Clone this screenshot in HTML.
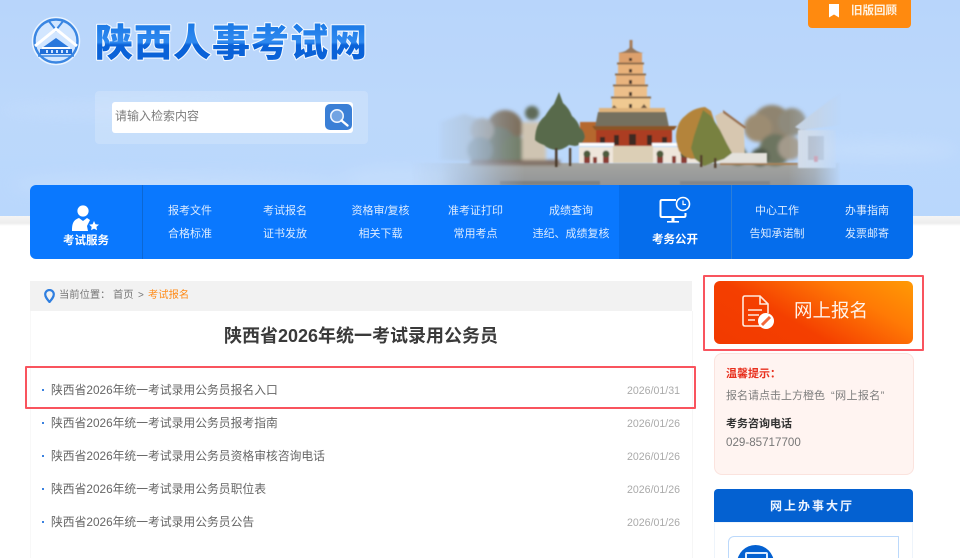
<!DOCTYPE html>
<html lang="zh-CN">
<head>
<meta charset="utf-8">
<title>陕西人事考试网</title>
<style>
html,body{margin:0;padding:0;background:#fff;width:960px;height:558px;overflow:hidden;}
#w{width:960px;height:558px;overflow:hidden;position:relative;font-family:"Liberation Sans","Noto Sans CJK SC",sans-serif;color:#666;filter:blur(.3px);}
.a{position:absolute;white-space:nowrap;line-height:1;}
.c{transform:translateX(-50%);}
.n{font-size:11px;color:#dcebff;}
.li{font-size:11.8px;color:#666;left:51px;}
.d{font-size:10.6px;color:#aaa;left:627px;}
.dot{position:absolute;left:42px;width:2px;height:2px;background:#3b82e0;}
</style>
</head>
<body>
<div id="w">
<div class="a" style="left:0;top:0;width:960px;height:216px;background:linear-gradient(180deg,#b8d5fb 0%,#bcd8fb 50%,#b9d7fc 100%);"></div>

<svg class="a" style="left:0;top:0" width="960" height="216" viewBox="0 0 960 216">
 <defs>
  <filter id="b1" x="-5%" y="-5%" width="110%" height="110%"><feGaussianBlur stdDeviation="0.8"/></filter>
  <filter id="b3" x="-5%" y="-5%" width="110%" height="110%"><feGaussianBlur stdDeviation="1.8"/></filter>
  <filter id="b2"><feGaussianBlur stdDeviation="8"/></filter>
  <linearGradient id="fade" x1="410" x2="850" y1="0" y2="0" gradientUnits="userSpaceOnUse">
   <stop offset="0" stop-color="#000"/><stop offset="0.07" stop-color="#1a1a1a"/><stop offset="0.14" stop-color="#666"/><stop offset="0.21" stop-color="#ccc"/><stop offset="0.26" stop-color="#fff"/>
   <stop offset="0.86" stop-color="#fff"/><stop offset="0.92" stop-color="#aaa"/><stop offset="0.98" stop-color="#000"/>
  </linearGradient>
  <mask id="m" maskUnits="userSpaceOnUse" x="410" y="0" width="440" height="216"><rect x="410" y="0" width="440" height="216" fill="url(#fade)"/></mask>
  <linearGradient id="lg" x1="0" x2="0" y1="0" y2="1"><stop offset="0" stop-color="#0f6fe0"/><stop offset="0.55" stop-color="#2f8af0"/><stop offset="0.6" stop-color="#0a62d8"/><stop offset="1" stop-color="#0a62d8"/></linearGradient>
  <linearGradient id="gr" x1="0" x2="0" y1="0" y2="1"><stop offset="0" stop-color="#a5a5a0"/><stop offset="1" stop-color="#8f9296"/></linearGradient>
 </defs>
 <g filter="url(#b2)" fill="#cfe3fd" opacity=".45">
  <ellipse cx="120" cy="110" rx="120" ry="6"/><ellipse cx="180" cy="185" rx="170" ry="12"/>
  <ellipse cx="880" cy="150" rx="80" ry="10"/><ellipse cx="400" cy="180" rx="60" ry="14"/>
 </g>
 <g mask="url(#m)">
  <g filter="url(#b1)">
   <rect x="410" y="163" width="430" height="24" fill="url(#gr)"/>
   <rect x="500" y="181" width="100" height="4" fill="#7f8182"/><rect x="680" y="181" width="90" height="4" fill="#84868a"/>
  </g>
  <g filter="url(#b3)">
   <path d="M440 160V122l24-8 18 6v42z" fill="#a6b1ba"/>
   <circle cx="505" cy="128" r="18" fill="#7a6b55"/><circle cx="498" cy="145" r="18" fill="#6f7666"/><circle cx="515" cy="150" r="14" fill="#707a63"/>
   <circle cx="482" cy="130" r="12" fill="#9b958b"/><circle cx="480" cy="150" r="13" fill="#7d8683"/>
   <rect x="522" y="122" width="24" height="42" fill="#cfc4b2"/>
   <circle cx="532" cy="113" r="7" fill="#5e6a58"/>
   <rect x="470" y="160" width="90" height="5" fill="#7a6658"/>
   <circle cx="772" cy="125" r="20" fill="#8f8470"/><circle cx="792" cy="122" r="14" fill="#8e8a7c"/><circle cx="758" cy="128" r="14" fill="#9c8c72"/>
   <circle cx="775" cy="150" r="16" fill="#6d7560"/><circle cx="790" cy="148" r="12" fill="#a39a8b"/>
   <circle cx="760" cy="157" r="9" fill="#50594a"/><circle cx="738" cy="156" r="9" fill="#545e47"/>
  </g>
  <g filter="url(#b1)">
   <path d="M722 112l22 16 1 35h-18l-6-22-6-25z" fill="#d7c7b0"/>
   <path d="M723 110l23 17-1 2-22-16z" fill="#9a6f4d"/>
   <rect x="712" y="153" width="55" height="10" fill="#e4e2dc"/>
   <rect x="580" y="122" width="16" height="24" fill="#b5682f"/>
   <path d="M535 140q0-16 10-24 5-8 9-12l5-12 4 11q6 5 9 13 6 5 8 12 4 2 5 9-2 8-10 9l-6-1q-6 5-13 5-8-1-12-5-6-2-9-5z" fill="#586a4c"/>
   <path d="M555 148h2.500v19H555z" fill="#4b3a2c"/>
   <path d="M569 148h2.200v18h-2.200z" fill="#4b3a2c"/>
   <rect x="629.500" y="40" width="3" height="9" fill="#a97e58"/>
   <path d="M618 53q9-1 13-7 4 6 13 7z" fill="#96775b"/>
   <rect x="619" y="53" width="23" height="10" fill="#dda06c"/><rect x="617" y="62.500" width="27" height="2" fill="#8a6a4c"/>
   <rect x="618" y="64.500" width="25" height="10" fill="#e9b27a"/><rect x="615" y="73.500" width="31" height="2" fill="#8a6a4c"/>
   <rect x="616" y="75.500" width="29" height="10" fill="#e9b47e"/><rect x="613" y="84.500" width="35" height="2" fill="#8a6a4c"/>
   <rect x="614" y="86.500" width="33" height="11" fill="#edbf8a"/><rect x="611" y="96.500" width="40" height="2.200" fill="#8a6a4c"/>
   <rect x="612" y="98.500" width="38" height="11" fill="#f0c991"/>
   <g fill="#3f3229"><rect x="629" y="58" width="3" height="3"/><rect x="629" y="69" width="3" height="3.500"/><rect x="629" y="80" width="3" height="4"/><rect x="629" y="92" width="3" height="4"/><rect x="629" y="104" width="3" height="4"/></g>
   <path d="M611 109l3-4 4 4zM640 109l4-5 4 5z" fill="#6d5640"/>
   <rect x="599" y="108" width="66" height="4" fill="#dfb47d"/>
   <path d="M598 112h68l3 15h-74z" fill="#75705f"/>
   <path d="M592 126h85l-3 4h-79z" fill="#8b5526"/>
   <rect x="596" y="130" width="76" height="16" fill="#ac3d22"/>
   <g fill="#3d2a22"><rect x="614" y="135" width="5" height="10"/><rect x="629" y="134" width="7" height="11"/><rect x="647" y="135" width="5" height="10"/><rect x="600" y="137" width="5" height="8"/><rect x="662" y="137" width="5" height="8"/></g>
   <rect x="579" y="147" width="35" height="16" fill="#efe6db"/>
   <rect x="652" y="147" width="48" height="16" fill="#efe6db"/>
   <rect x="613" y="146" width="40" height="17" fill="#dccfb6"/>
   <rect x="579" y="143" width="35" height="3" fill="#fff"/><rect x="652" y="143" width="32" height="3" fill="#fff"/>
   <g fill="#8a3a30"><rect x="584" y="155" width="6" height="8"/><rect x="593" y="157" width="4" height="6"/><rect x="603" y="155" width="6" height="8"/><rect x="657" y="155" width="6" height="8"/><rect x="672" y="156" width="4" height="7"/><rect x="681" y="155" width="6" height="8"/></g>
   <g fill="#4d5a3a"><circle cx="587" cy="154" r="3.500"/><circle cx="606" cy="154" r="3.500"/><circle cx="660" cy="154" r="3.500"/><circle cx="684" cy="154" r="3.500"/></g>
   <path d="M676 136q1-14 9-20 8-8 20-9l6 4 4 12-6 18-8 18h-10q-8-2-12-8-3-8-3-15z" fill="#b4843a"/>
   <path d="M703 110l8 6 9 14 7 14 5 9-8 6-12 4-8 3-9-7-4-11 3-12 4-12z" fill="#78813f"/>
   <path d="M700 155h2.500v12H700zM714 158h2.500v10H714z" fill="#54402d"/>
   <rect x="720" y="163" width="90" height="2" fill="#a88158"/>
   <path d="M795 127l18-14 16-12 12-8v32l-40 5z" fill="#c7d2df"/>
   <rect x="798" y="130" width="38" height="38" fill="#d6dde6"/><rect x="808" y="136" width="16" height="24" fill="#b4b9c2"/>
   <rect x="814" y="156" width="4" height="6" fill="#d48a94"/>
  </g>
 </g>
 <g>
  <circle cx="56" cy="41" r="23.500" fill="#d2e6ff" stroke="#eaf4ff" stroke-width="1.500"/>
  <circle cx="56" cy="41" r="21.500" fill="none" stroke="#3a86e2" stroke-width="2.400"/>
  <path d="M48 20l8 10 8-10" fill="none" stroke="#3a86e2" stroke-width="2"/>
  <path d="M35 46l21-17 21 17" fill="none" stroke="#fff" stroke-width="3"/>
  <path d="M42 48l14-10 14 10z" fill="#2a78dc"/>
  <rect x="42" y="47" width="28" height="2" fill="#fff"/>
  <rect x="40" y="49" width="32" height="5" fill="#1f6dd6"/>
  <g fill="#cfe3ff"><rect x="46" y="50" width="2" height="3"/><rect x="51" y="50" width="2" height="3"/><rect x="56" y="50" width="2" height="3"/><rect x="61" y="50" width="2" height="3"/><rect x="66" y="50" width="2" height="3"/></g>
  <path d="M38 56h36" stroke="#3a86e2" stroke-width="1.500"/>
 </g>
 <text x="95" y="56" font-family="'Noto Sans CJK SC',sans-serif" font-weight="900" font-size="38" letter-spacing="1" fill="url(#lg)" stroke="#f2f8ff" stroke-width="2.200" paint-order="stroke" stroke-linejoin="round">陕西人事考试网</text>
</svg>

<div class="a" style="left:808px;top:-4px;width:103px;height:32px;background:#ff8a0f;border-radius:4px;"></div>
<svg class="a" style="left:828px;top:4px" width="12" height="14" viewBox="0 0 12 14"><path d="M1 0h10v13.500l-5-3-5 3z" fill="#fff"/></svg>
<div class="a" style="left:851px;top:6px;font-size:11.500px;font-weight:700;color:#fff2e2;">旧版回顾</div>

<div class="a" style="left:95px;top:91px;width:273px;height:53px;background:rgba(255,255,255,.18);border-radius:4px;"></div>
<div class="a" style="left:112px;top:102px;width:241px;height:31px;background:#fff;border-radius:3px;"></div>
<div class="a" style="left:115px;top:110px;font-size:12px;color:#7d7d7d;">请输入检索内容</div>
<div class="a" style="left:325px;top:104px;width:27px;height:26px;background:#3a7fd6;border-radius:5px;"></div>
<svg class="a" style="left:325px;top:104px" width="27" height="26" viewBox="0 0 27 26"><circle cx="12" cy="12" r="6.200" fill="#a9c9ef" fill-opacity=".5" stroke="#eef5ff" stroke-width="1.600"/><path d="M16.500 16.500l6 5" stroke="#fff" stroke-width="2.400" stroke-linecap="round"/></svg>

<div class="a" style="left:0;top:216px;width:960px;height:10px;background:linear-gradient(180deg,#f5f5f5,#ededed 70%,#fff);"></div>

<div class="a" style="left:30px;top:185px;width:883px;height:74px;background:#0a78fe;border-radius:6px;overflow:hidden;">
 <div class="a" style="left:112px;top:0;width:1px;height:74px;background:#0c67d3;"></div>
 <div class="a" style="left:589px;top:0;width:294px;height:74px;background:#056dec;"></div>
 <div class="a" style="left:701px;top:0;width:1px;height:74px;background:#2b7ed9;"></div>
</div>
<svg class="a" style="left:70px;top:203px" width="32" height="30" viewBox="0 0 32 30"><circle cx="13" cy="8" r="5.600" fill="#fff"/><path d="M2 28c0-7 1-11 7-13l4 3 4-3 3 2-3 6 1 5z" fill="#fff"/><path d="M20 20l1.500 3.200 3.500.4-2.600 2.300.7 3.400-3.100-1.700-3 1.700.7-3.400-2.600-2.300 3.500-.4z" transform="translate(4 -2)" fill="#fff"/></svg>
<div class="a c" style="left:86px;top:236px;font-size:11.500px;font-weight:700;color:#fff;">考试服务</div>

<div class="a c n" style="left:190px;top:206px;">报考文件</div><div class="a c n" style="left:190px;top:229px;">合格标准</div>
<div class="a c n" style="left:285px;top:206px;">考试报名</div><div class="a c n" style="left:285px;top:229px;">证书发放</div>
<div class="a c n" style="left:380.500px;top:206px;">资格审/复核</div><div class="a c n" style="left:380.500px;top:229px;">相关下载</div>
<div class="a c n" style="left:475.500px;top:206px;">准考证打印</div><div class="a c n" style="left:475.500px;top:229px;">常用考点</div>
<div class="a c n" style="left:571px;top:206px;">成绩查询</div><div class="a c n" style="left:571px;top:229px;">违纪、成绩复核</div>
<div class="a c n" style="left:777px;top:206px;">中心工作</div><div class="a c n" style="left:777px;top:229px;">告知承诺制</div>
<div class="a c n" style="left:867px;top:206px;">办事指南</div><div class="a c n" style="left:867px;top:229px;">发票邮寄</div>

<svg class="a" style="left:659px;top:196px" width="32" height="28" viewBox="0 0 32 28"><path d="M17 4H3q-1.500 0-1.500 1.500v14q0 1.500 1.500 1.500h22q1.500 0 1.500-1.500V17" fill="none" stroke="#fff" stroke-width="2"/><rect x="12.500" y="21" width="3" height="4" fill="#fff"/><rect x="8" y="25" width="12" height="1.600" fill="#fff"/><circle cx="24" cy="8" r="6.500" fill="#056dec" stroke="#fff" stroke-width="1.600"/><path d="M24 4.500v4h3" fill="none" stroke="#fff" stroke-width="1.200"/></svg>
<div class="a c" style="left:675px;top:235px;font-size:11.500px;font-weight:700;color:#fff;">考务公开</div>

<div class="a" style="left:30px;top:311px;width:661px;height:247px;border-left:1px solid #f8f8f8;border-right:1px solid #f6f6f6;"></div>
<div class="a" style="left:30px;top:281px;width:662px;height:30px;background:#f2f2f2;"></div>
<svg class="a" style="left:44px;top:289px" width="11" height="14" viewBox="0 0 11 14"><path d="M5.500 13C3 10 1.200 8 1.200 5.300a4.300 4.300 0 0 1 8.600 0C9.800 8 8 10 5.500 13z" fill="none" stroke="#2f7fe0" stroke-width="2.200"/></svg>
<div class="a" style="left:59px;top:291px;font-size:10.300px;color:#777;">当前位置：</div>
<div class="a" style="left:113px;top:291px;font-size:10.300px;color:#777;">首页</div>
<div class="a" style="left:138px;top:291px;font-size:10px;color:#777;">&gt;</div>
<div class="a" style="left:148px;top:291px;font-size:10.300px;color:#ff8c1a;">考试报名</div>
<div class="a c" style="left:361px;top:327px;font-size:18px;font-weight:700;color:#3a3a3a;">陕西省2026年统一考试录用公务员</div>

<div class="dot" style="top:389px"></div><div class="a li" style="top:385px;">陕西省2026年统一考试录用公务员报名入口</div><div class="a d" style="top:386px;">2026/01/31</div>
<div class="dot" style="top:422px"></div><div class="a li" style="top:418px;">陕西省2026年统一考试录用公务员报考指南</div><div class="a d" style="top:419px;">2026/01/26</div>
<div class="dot" style="top:455px"></div><div class="a li" style="top:451px;">陕西省2026年统一考试录用公务员资格审核咨询电话</div><div class="a d" style="top:452px;">2026/01/26</div>
<div class="dot" style="top:488px"></div><div class="a li" style="top:484px;">陕西省2026年统一考试录用公务员职位表</div><div class="a d" style="top:485px;">2026/01/26</div>
<div class="dot" style="top:521px"></div><div class="a li" style="top:517px;">陕西省2026年统一考试录用公务员公告</div><div class="a d" style="top:518px;">2026/01/26</div>

<div class="a" style="left:25px;top:366px;width:667px;height:39px;border:2.500px solid #f9545e;border-radius:1px;"></div>

<div class="a" style="left:703px;top:275px;width:217px;height:72px;border:2.500px solid #f9545e;border-radius:1px;"></div>
<div class="a" style="left:714px;top:281px;width:199px;height:63px;border-radius:6px;background:linear-gradient(30deg,#f23a00 0%,#f43f00 38%,#ff7a05 72%,#ff9a05 100%);"></div>
<svg class="a" style="left:740px;top:295px" width="36" height="36" viewBox="0 0 36 36"><path d="M24 31H5q-2 0-2-2V3q0-2 2-2h15l8 8v9M20 1v8h8" fill="none" stroke="#ffe9dc" stroke-width="1.600"/><path d="M8 15h14M8 20h11M8 25h7" stroke="#ffe9dc" stroke-width="1.600"/><circle cx="26" cy="26" r="8" fill="#fff"/><path d="M22 30l8-8" stroke="#f2683a" stroke-width="3"/></svg>
<div class="a" style="left:794px;top:302px;font-size:18.500px;color:#fff3ea;">网上报名</div>

<div class="a" style="left:714px;top:353px;width:198px;height:120px;background:#fff4f1;border:1px solid #fbe3de;border-radius:8px;"></div>
<div class="a" style="left:726px;top:369px;font-size:11px;font-weight:700;color:#e8301e;">温馨提示：</div>
<div class="a" style="left:726px;top:391px;font-size:11px;color:#7d7d7d;">报名请点击上方橙色</div>
<div class="a" style="left:831px;top:391px;font-size:11px;color:#7d7d7d;letter-spacing:.4px;">“网上报名”</div>
<div class="a" style="left:726px;top:419px;font-size:11px;font-weight:700;color:#333;">考务咨询电话</div>
<div class="a" style="left:726px;top:437px;font-size:11.600px;color:#777;">029-85717700</div>

<div class="a" style="left:714px;top:522px;width:197px;height:36px;border:1px solid #eef4fb;border-bottom:0;"></div>
<div class="a" style="left:714px;top:489px;width:199px;height:33px;background:#0461d1;border-radius:4px 4px 0 0;"></div>
<div class="a c" style="left:812px;top:500px;font-size:12px;font-weight:700;color:#eef5ff;letter-spacing:2px;">网上办事大厅</div>
<div class="a" style="left:728px;top:536px;width:169px;height:40px;border:1px solid #bcd9fb;border-radius:6px 0 0 0;"></div>
<div class="a" style="left:737px;top:545px;width:37px;height:37px;border-radius:50%;background:#0461d1;"></div>
<div class="a" style="left:745px;top:552px;width:19px;height:10px;border:2px solid #dcebff;border-radius:2px;"></div>
</div>
</body>
</html>
